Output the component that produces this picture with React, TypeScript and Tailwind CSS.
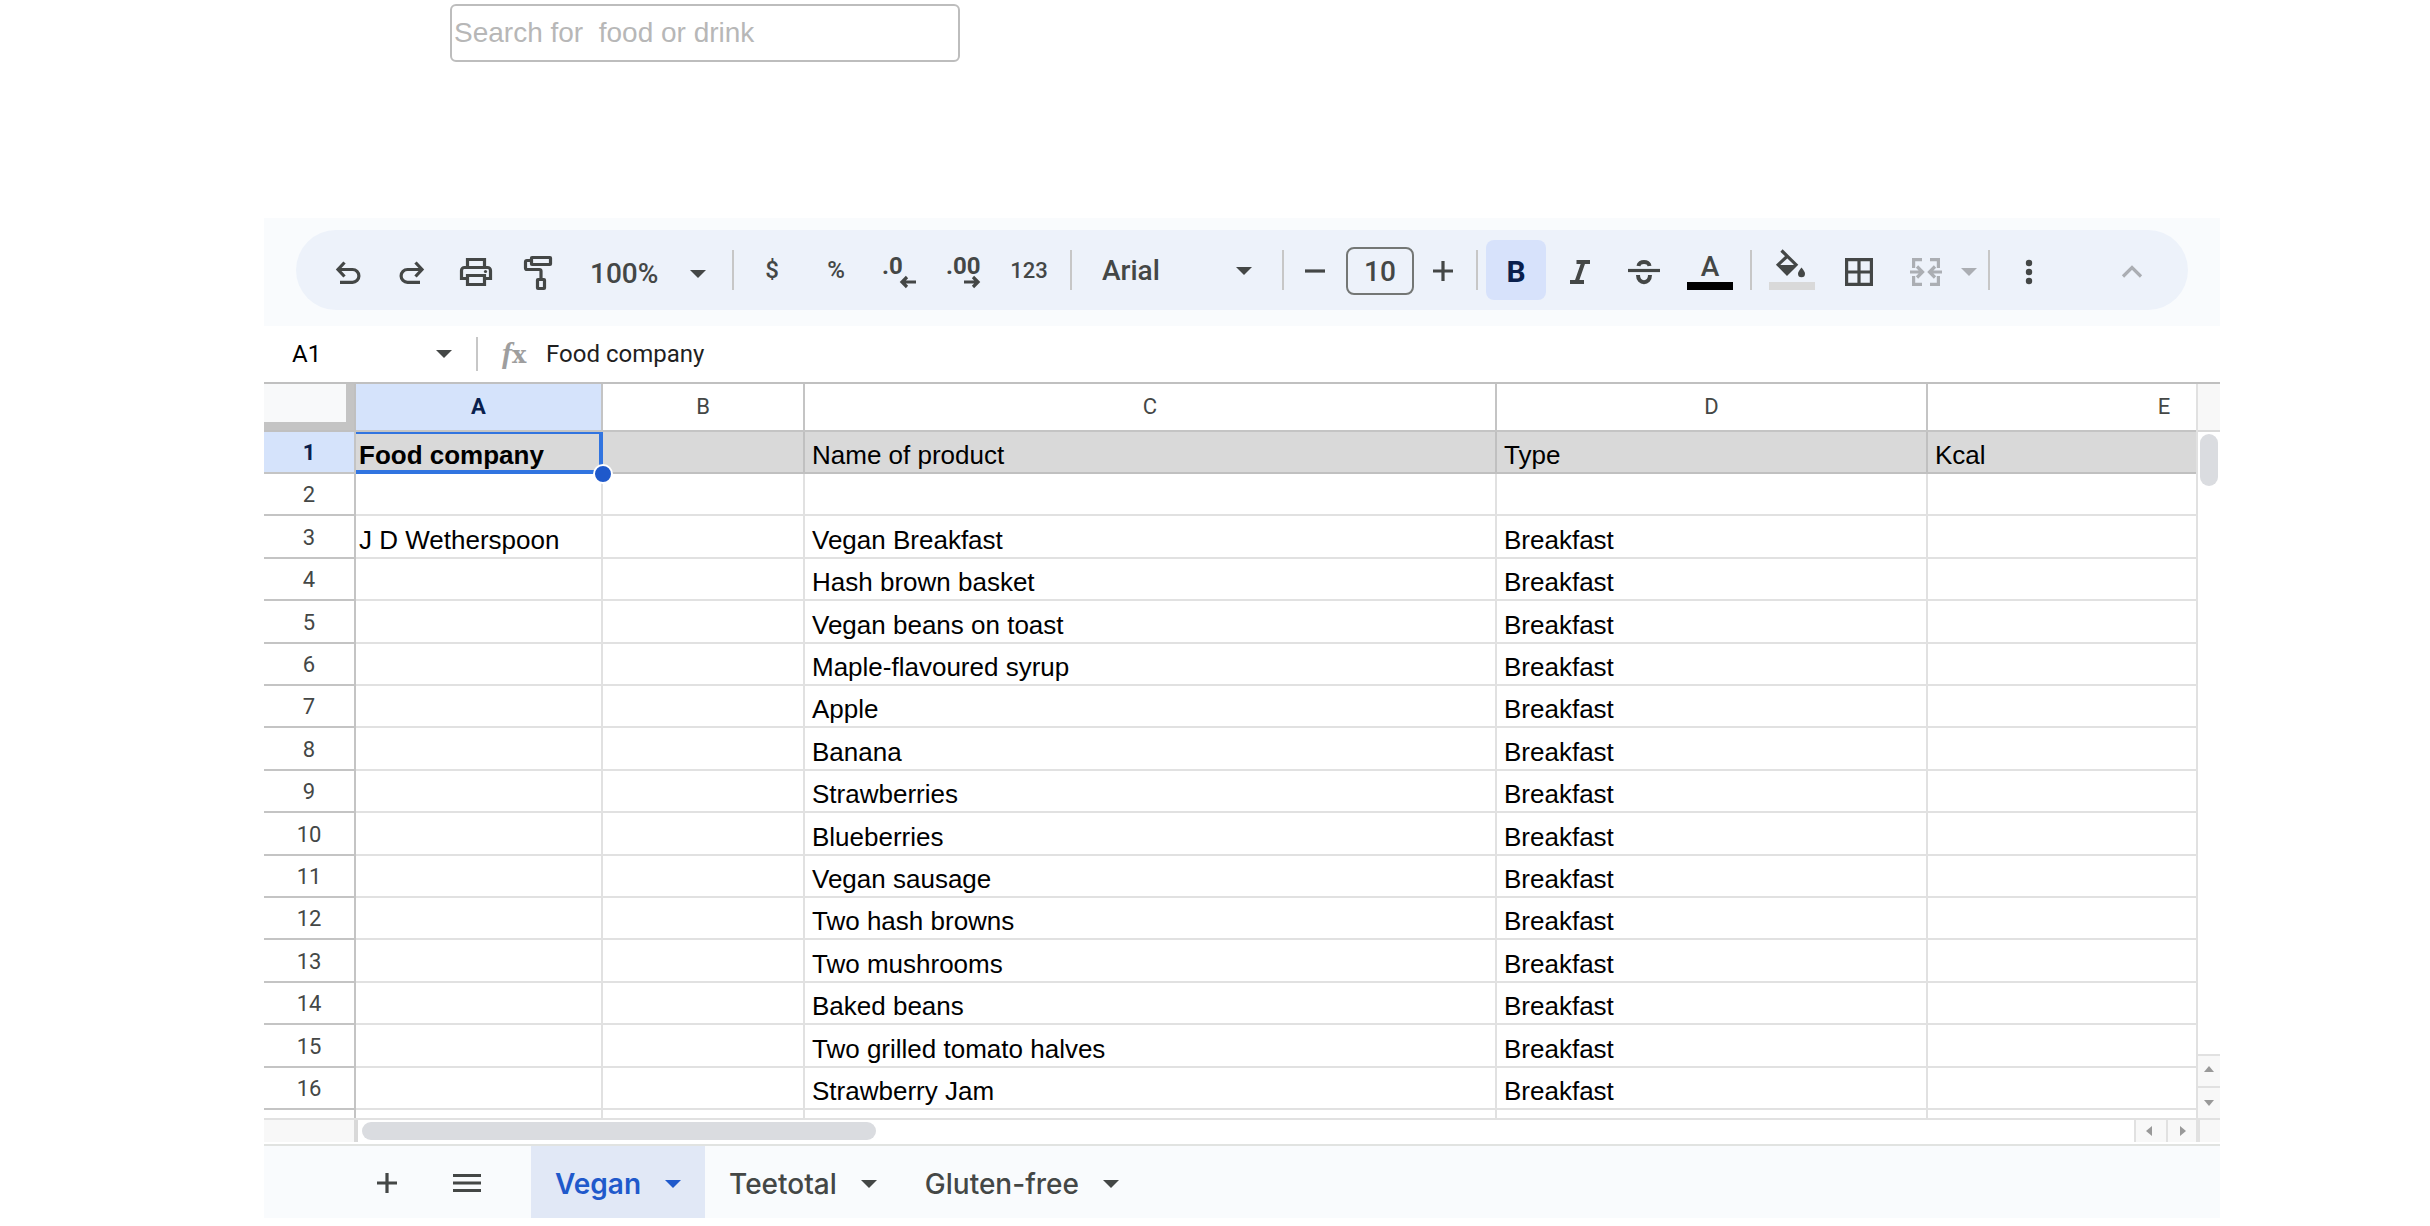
import { useState, type ReactNode } from 'react';
import { clsx } from 'clsx';

const COLUMNS = [
  { id: 'A', width: 'w-[247px]' },
  { id: 'B', width: 'w-[202px]' },
  { id: 'C', width: 'w-[692px]' },
  { id: 'D', width: 'w-[431px]' },
  { id: 'E', width: 'w-[474px]' },
];

const ROWS = [
  ['Food company', '', 'Name of product', 'Type', 'Kcal'],
  ['', '', '', '', ''],
  ['J D Wetherspoon', '', 'Vegan Breakfast', 'Breakfast', ''],
  ['', '', 'Hash brown basket', 'Breakfast', ''],
  ['', '', 'Vegan beans on toast', 'Breakfast', ''],
  ['', '', 'Maple-flavoured syrup', 'Breakfast', ''],
  ['', '', 'Apple', 'Breakfast', ''],
  ['', '', 'Banana', 'Breakfast', ''],
  ['', '', 'Strawberries', 'Breakfast', ''],
  ['', '', 'Blueberries', 'Breakfast', ''],
  ['', '', 'Vegan sausage', 'Breakfast', ''],
  ['', '', 'Two hash browns', 'Breakfast', ''],
  ['', '', 'Two mushrooms', 'Breakfast', ''],
  ['', '', 'Baked beans', 'Breakfast', ''],
  ['', '', 'Two grilled tomato halves', 'Breakfast', ''],
  ['', '', 'Strawberry Jam', 'Breakfast', ''],
];

const TABS = ['Vegan', 'Teetotal', 'Gluten-free'];

function Icon({ children }: { children: ReactNode }) {
  return (
    <svg viewBox="0 0 48 48" className="h-12 w-12 shrink-0" fill="none" stroke="currentColor" strokeWidth="3.2" aria-hidden="true">
      {children}
    </svg>
  );
}

function Caret({ className }: { className?: string }) {
  return (
    <svg viewBox="0 0 16 8" className={clsx('h-2 w-4 shrink-0', className)} fill="currentColor" aria-hidden="true">
      <path d="M0 0H16L8 8Z" />
    </svg>
  );
}

function Divider({ className }: { className?: string }) {
  return <span className={clsx('h-10 w-0.5 shrink-0 bg-[#c7c7c7]', className)} />;
}

function ToolButton({ label, children, className }: { label: string; children: ReactNode; className?: string }) {
  return (
    <button type="button" aria-label={label} className={clsx('flex h-15 shrink-0 items-center justify-center', className ?? 'w-16')}>
      {children}
    </button>
  );
}

function Toolbar() {
  return (
    <div className="bg-[#f9fbfd] px-8 pt-3 pb-4">
      <div className="flex h-20 items-center rounded-full bg-[#edf2fa] pr-6 pl-5 font-[Roboto,sans-serif] font-medium text-[#444746]">
        <ToolButton label="Undo">
          <Icon>
            <path d="M20.5 16.5L14 23.5L20.5 30.5M14 23.5H28.5a6.3 6.3 0 0 1 0 12.8H16" />
          </Icon>
        </ToolButton>
        <ToolButton label="Redo">
          <Icon>
            <path d="M27.5 16.5L34 23.5L27.5 30.5M34 23.5H19.5a6.3 6.3 0 0 0 0 12.8H32" />
          </Icon>
        </ToolButton>
        <ToolButton label="Print">
          <Icon>
            <path d="M15.5 21.5V13.5H32.5V21.5M14 32.5H9.5V24.5a3 3 0 0 1 3-3H35.5a3 3 0 0 1 3 3V32.5H34" />
            <path d="M15.5 29.5H32.5V38.5H15.5Z" />
            <circle cx="33.5" cy="25.5" r="1.6" fill="currentColor" stroke="none" />
          </Icon>
        </ToolButton>
        <ToolButton label="Paint format">
          <Icon>
            <rect x="15.5" y="11.5" width="19" height="7" rx="0.5" />
            <path d="M14 14.5H11a1.5 1.5 0 0 0-1.5 1.5V22a1.5 1.5 0 0 0 1.5 1.5H23.5a1.5 1.5 0 0 1 1.5 1.5V33" />
            <rect x="21.5" y="33.5" width="7" height="9" rx="0.5" />
          </Icon>
        </ToolButton>
        <div className="relative w-40 shrink-0 pt-2">
          <select aria-label="Zoom" className="w-full appearance-none bg-transparent pl-[18px] text-[28px] leading-9">
            <option>100%</option>
          </select>
          <Caret className="pointer-events-none absolute top-[22px] right-[26px]" />
        </div>
        <Divider className="mr-1.5" />
        <ToolButton label="Format as currency">
          <span className="text-2xl">$</span>
        </ToolButton>
        <ToolButton label="Format as percent">
          <span className="text-2xl">%</span>
        </ToolButton>
        <ToolButton label="Decrease decimal places">
          <Icon>
            <text x="6" y="28" fill="currentColor" stroke="none" className="text-2xl font-bold">.0</text>
            <path d="M40 36H26M31 31L26 36L31 41" />
          </Icon>
        </ToolButton>
        <ToolButton label="Increase decimal places">
          <Icon>
            <text x="6" y="28" fill="currentColor" stroke="none" className="text-2xl font-bold">.00</text>
            <path d="M24 36H38M33 31L38 36L33 41" />
          </Icon>
        </ToolButton>
        <ToolButton label="More formats" className="w-[66px]">
          <span className="text-[22px]">123</span>
        </ToolButton>
        <Divider className="ml-2" />
        <div className="relative w-[210px] shrink-0 pt-0.5">
          <select aria-label="Font" className="w-full appearance-none bg-transparent pl-[30px] text-[28px] leading-9">
            <option>Arial</option>
          </select>
          <Caret className="pointer-events-none absolute top-4 right-[30px]" />
        </div>
        <Divider />
        <ToolButton label="Decrease font size" className="w-[62px]">
          <Icon>
            <path d="M14 25H34" />
          </Icon>
        </ToolButton>
        <input
          type="text"
          aria-label="Font size"
          defaultValue="10"
          className="mt-0.5 h-12 w-[68px] shrink-0 rounded-lg border-2 border-[#747775] text-center text-[28px] leading-9"
        />
        <ToolButton label="Increase font size" className="w-[58px]">
          <Icon>
            <path d="M14 25H34M24 15V35" />
          </Icon>
        </ToolButton>
        <Divider className="ml-1 mr-2" />
        <ToolButton label="Bold" className="w-15 rounded-lg bg-[#d7e2fb] pt-0.5 text-[#0a1f4d]">
          <span className="text-[30px] font-bold">B</span>
        </ToolButton>
        <ToolButton label="Italic" className="ml-0.5 w-16">
          <Icon>
            <path strokeWidth="4" d="M20.5 16H34M14 36H28M27.5 16L20.5 36" />
          </Icon>
        </ToolButton>
        <ToolButton label="Strikethrough">
          <Icon>
            <path d="M8 24.5H40" />
            <path strokeWidth="4" d="M18.500 20C19 14.500 29 14.500 29.500 20M18 29C18 38.500 30 38.500 30 29" />
          </Icon>
        </ToolButton>
        <ToolButton label="Text color" className="w-[68px]">
          <Icon>
            <text x="24" y="30" textAnchor="middle" fill="currentColor" stroke="none" className="text-[28px]">A</text>
            <path stroke="none" className="fill-black" d="M1 36H47V44H1Z" />
          </Icon>
        </ToolButton>
        <Divider className="mx-1.5" />
        <ToolButton label="Fill color" className="w-[68px]">
          <Icon>
            <path d="M13.5 4.5L28 18.7L19 27.7L10.2 18.7L19.5 10" />
            <path fill="currentColor" stroke="none" d="M9 19H29L19 29ZM33.5 21.5C35.5 24 37 26 37 27.7a3.5 3.5 0 0 1-7 0C30 26 31.5 24 33.5 21.5Z" />
            <path stroke="none" className="fill-[#d9d9d9]" d="M1 36H47V44H1Z" />
          </Icon>
        </ToolButton>
        <ToolButton label="Borders" className="w-[66px]">
          <Icon>
            <path d="M11.6 13.6H36.4V38.4H11.6ZM24 13V39M11 26H37" />
          </Icon>
        </ToolButton>
        <ToolButton label="Merge cells" className="w-[94px] gap-[11px] text-[#abaeb3]">
          <Icon>
            <path d="M20 13.6H11.6V22M11.6 30V38.4H20M28 13.6H36.4V22M36.4 30V38.4H28M8 26H20M15 20.5L20.5 26L15 31.5M40 26H28M33 20.5L27.5 26L33 31.5" />
          </Icon>
          <Caret className="mt-1" />
        </ToolButton>
        <Divider className="mr-2 ml-0.5" />
        <ToolButton label="More" className="w-[62px]">
          <Icon>
            <g fill="currentColor" stroke="none">
              <circle cx="24" cy="17" r="3.2" />
              <circle cx="24" cy="26" r="3.2" />
              <circle cx="24" cy="35" r="3.2" />
            </g>
          </Icon>
        </ToolButton>
        <ToolButton label="Hide the menus" className="ml-auto w-16 text-[#abaeb3]">
          <Icon>
            <path d="M15 30.5L24 21.5L33 30.5" />
          </Icon>
        </ToolButton>
      </div>
    </div>
  );
}

function FormulaBar() {
  return (
    <div className="flex h-[58px] items-center border-b-2 border-[#c0c0c0] bg-white font-[Roboto,sans-serif] text-2xl text-[#1f1f1f]">
      <input type="text" aria-label="Name box" defaultValue="A1" className="ml-7 w-36 text-black" />
      <button type="button" aria-label="Named ranges" className="flex h-10 w-4 items-center text-[#444746]">
        <Caret />
      </button>
      <span className="mx-6 h-[34px] w-0.5 bg-[#c7c7c7]" />
      <label htmlFor="formula" className="flex w-11 items-baseline text-[#9e9e9e]">
        <i className="font-['Liberation_Serif',serif] text-[30px] leading-8 font-bold">f</i>
        <span className="font-['DejaVu_Serif',serif] text-2xl leading-8 font-bold">x</span>
      </label>
      <input id="formula" type="text" defaultValue="Food company" className="min-w-0 flex-1" />
    </div>
  );
}

function Sheet() {
  return (
    <table className="w-[2138px] table-fixed border-separate border-spacing-0">
      <thead className="font-[Roboto,sans-serif] text-[22px] text-[#444746]">
        <tr className="h-12">
          <th className="w-[92px] border-r-2 border-b-2 border-[#c0c0c0] p-0">
            <div className="h-[46px] border-r-8 border-b-8 border-[#c4c4c4] bg-[#f8f9fa]" />
          </th>
          {COLUMNS.map((col) => (
            <th
              key={col.id}
              scope="col"
              className={clsx(
                'border-r-2 border-b-2 border-[#c4c4c4] p-0 pb-0.5',
                col.width,
                col.id === 'A' ? 'bg-[#d5e3fb] font-bold text-[#0a1f4d]' : 'font-normal',
              )}
            >
              {col.id}
            </th>
          ))}
        </tr>
      </thead>
      <tbody className="font-['Liberation_Sans',Arial,sans-serif] text-[26px] leading-[30px] text-black">
        {ROWS.map((row, r) => (
          <tr key={r} className="h-[42px] nth-[5n]:h-[43px] nth-[5n+3]:h-[43px]">
            <th
              scope="row"
              className={clsx(
                'border-r-2 border-b-2 border-[#c4c4c4] p-0 pt-0.5 font-[Roboto,sans-serif] text-[22px]',
                r === 0 ? 'bg-[#d5e3fb] font-bold text-[#0a1f4d]' : 'font-normal text-[#444746]',
              )}
            >
              {r + 1}
            </th>
            {row.map((value, c) => (
              <td
                key={c}
                className={clsx(
                  'border-r-2 border-b-2 p-0 pb-0.5 align-bottom whitespace-nowrap',
                  c === 0 ? 'pl-[3px]' : 'pl-[7px]',
                  r === 0 ? 'border-[#c0c0c0] bg-[#d9d9d9]' : 'border-[#e1e1e1]',
                  r === 0 && c === 0 && 'relative font-bold',
                )}
              >
                {value}
                {r === 0 && c === 0 && (
                  <>
                    <span className="absolute top-0 -right-0.5 -bottom-0.5 left-0 border-t-2 border-r-4 border-b-4 border-[#3174e0]" />
                    <span className="absolute -right-3 -bottom-3 z-10 h-5 w-5 rounded-full border-2 border-white bg-[#1f59cb]" />
                  </>
                )}
              </td>
            ))}
          </tr>
        ))}
        <tr className="h-[42px]">
          <th className="border-r-2 border-[#c4c4c4]" />
          {COLUMNS.map((col) => (
            <td key={col.id} className="border-r-2 border-[#e1e1e1]" />
          ))}
        </tr>
      </tbody>
    </table>
  );
}

function ScrollArrow({ label, d, className }: { label: string; d: string; className: string }) {
  return (
    <button type="button" aria-label={label} className={clsx('flex items-center justify-center border-[#e1e1e1] bg-[#f8f8f8] text-[#999]', className)}>
      <svg viewBox="0 0 12 12" className="h-3 w-3" fill="currentColor" aria-hidden="true">
        <path d={d} />
      </svg>
    </button>
  );
}

function SheetTabs() {
  const [active, setActive] = useState('Vegan');

  return (
    <div className="flex h-[74px] items-stretch border-t-2 border-[#e1e3e1] bg-[#f9fbfd] pl-[91px] font-[Inter,sans-serif] text-[28px] text-[#444746]">
      <button type="button" aria-label="Add sheet" className="flex w-16 items-center justify-center">
        <Icon>
          <path d="M14 25H34M24 15V35" />
        </Icon>
      </button>
      <button type="button" aria-label="All sheets" className="mr-8 ml-4 flex w-16 items-center justify-center">
        <Icon>
          <path d="M10 17.5H38M10 25H38M10 32.5H38" />
        </Icon>
      </button>
      {TABS.map((tab) => (
        <button
          key={tab}
          type="button"
          onClick={() => setActive(tab)}
          className={clsx(
            'flex items-center gap-6 px-6 pt-1',
            tab === active ? 'bg-[#e1e8f6] font-semibold text-[#1f59cb]' : 'font-medium',
          )}
        >
          {tab}
          <Caret />
        </button>
      ))}
    </div>
  );
}

export default function App() {
  return (
    <main className="bg-white pt-1 pb-2">
      <input
        type="search"
        aria-label="Search"
        placeholder="Search for  food or drink"
        className="ml-[450px] block h-[58px] w-[510px] rounded-md border-2 border-[#bdbdbd] px-0.5 font-['Liberation_Sans',Arial,sans-serif] text-[28px] placeholder:text-[#b7b7b7]"
      />
      <section aria-label="Menu spreadsheet" className="mt-39 mr-[210px] ml-[264px]">
        <Toolbar />
        <FormulaBar />
        <div className="flex h-[736px] border-b-2 border-[#e1e1e1]">
          <div className="min-w-0 flex-1 overflow-hidden">
            <Sheet />
          </div>
          <div className="flex w-6 shrink-0 flex-col border-l-2 border-[#e1e1e1]">
            <div className="h-12 border-b-2 border-[#d9d9d9] bg-[#f8f8f8]" />
            <div className="mx-0.5 mt-0.5 h-[52px] rounded-full bg-[#dadce0]" />
            <ScrollArrow label="Scroll up" d="M1 7L6 1L11 7Z" className="mt-auto h-8 border-t-2" />
            <ScrollArrow label="Scroll down" d="M1 3L6 9L11 3Z" className="h-8 border-t-2" />
          </div>
        </div>
        <div className="flex h-6 pb-0.5">
          <div className="w-[94px] border-r-4 border-[#d9d9d9] bg-[#f8f8f8]" />
          <div className="my-0.5 ml-1 w-[514px] rounded-full bg-[#dadce0]" />
          <ScrollArrow label="Scroll left" d="M7 1L1 6L7 11Z" className="ml-auto w-8 border-l-2" />
          <ScrollArrow label="Scroll right" d="M4 1L10 6L4 11Z" className="w-[30px] border-l-2" />
          <div className="w-6 border-l-4 border-[#e1e1e1] bg-[#f8f8f8]" />
        </div>
        <SheetTabs />
      </section>
    </main>
  );
}
